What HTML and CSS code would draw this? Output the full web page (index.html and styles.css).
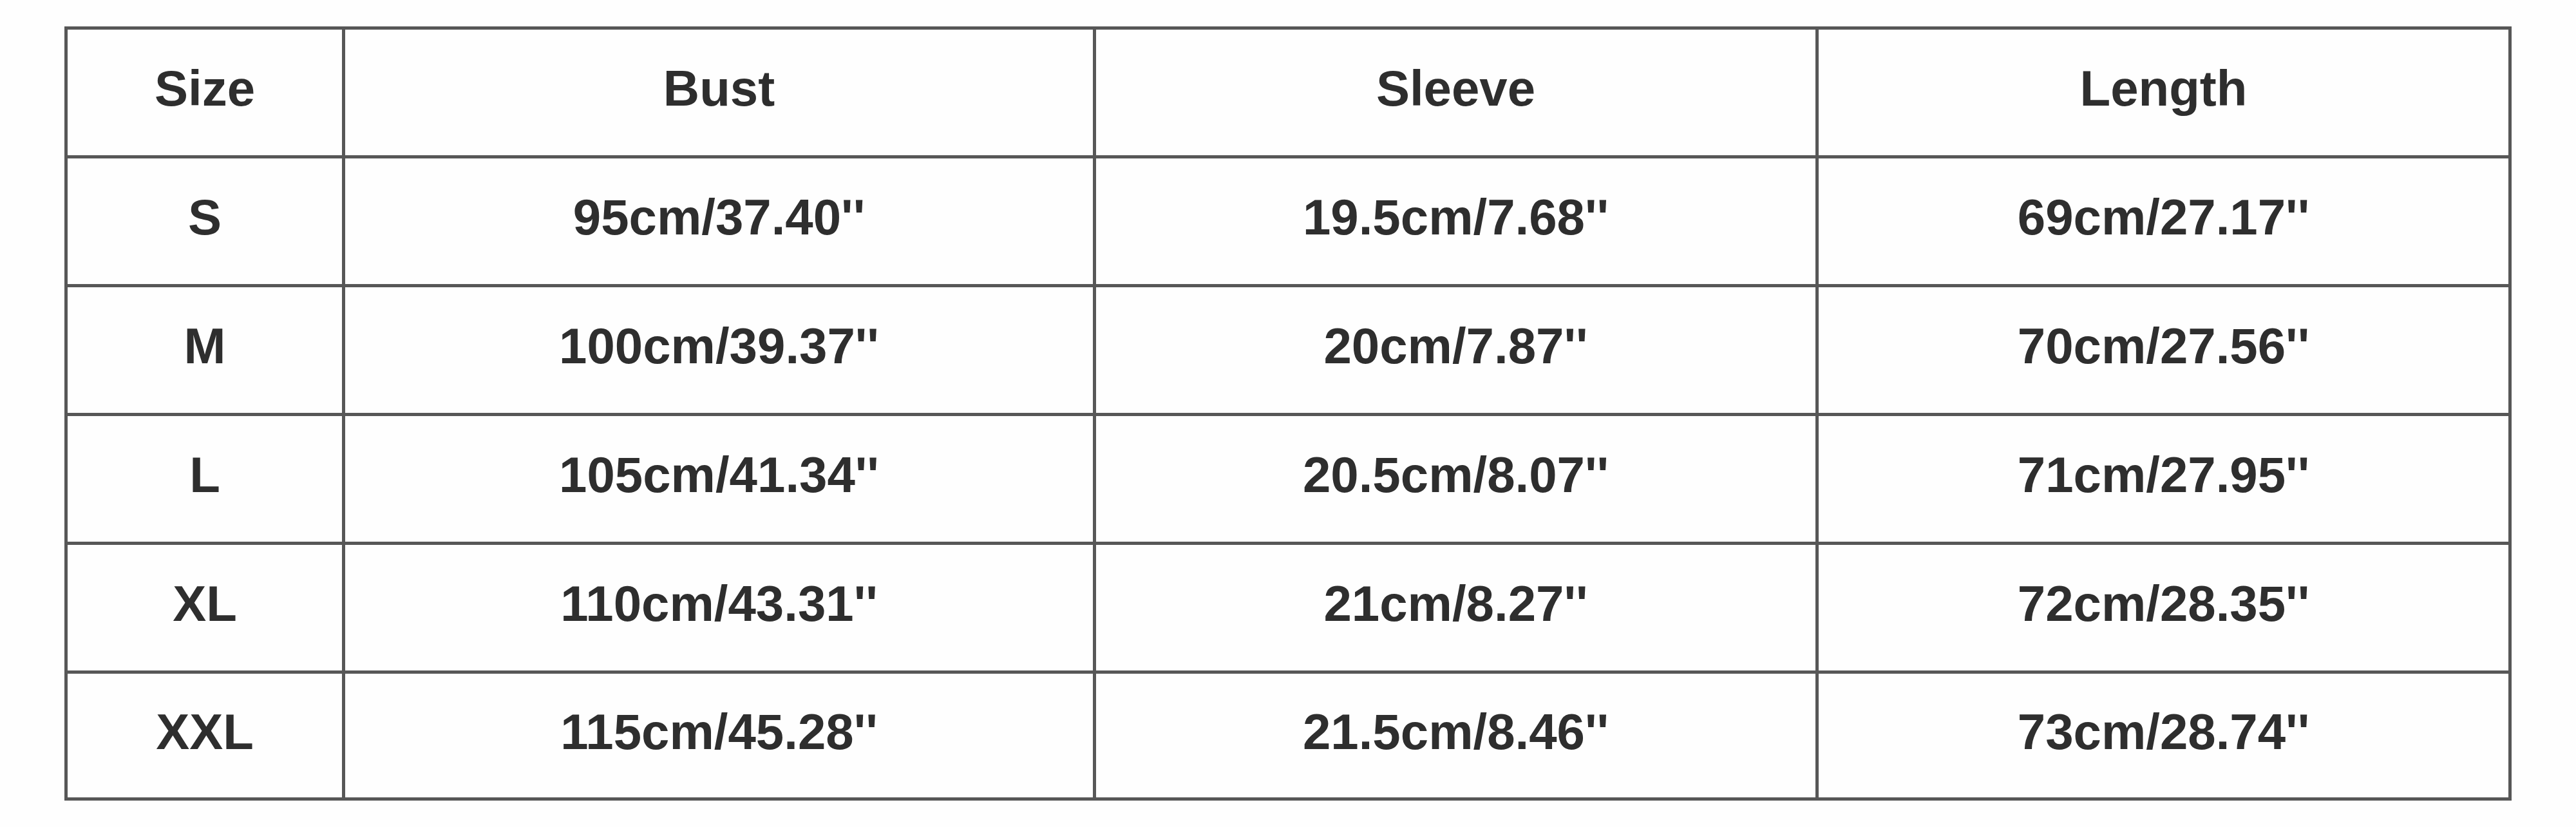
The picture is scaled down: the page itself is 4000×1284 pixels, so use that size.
FILE: index.html
```html
<!DOCTYPE html>
<html lang="en">
<head>
<meta charset="utf-8">
<title>Size Chart</title>
<link rel="stylesheet" href="styles.css">
</head>
<body>
<table class="chart">
  <colgroup>
    <col class="c-size">
    <col class="c-bust">
    <col class="c-sleeve">
    <col class="c-length">
  </colgroup>
  <tr class="r-head"><td>Size</td><td>Bust</td><td>Sleeve</td><td>Length</td></tr>
  <tr class="r"><td>S</td><td>95cm/37.40''</td><td>19.5cm/7.68''</td><td>69cm/27.17''</td></tr>
  <tr class="r"><td>M</td><td>100cm/39.37''</td><td>20cm/7.87''</td><td>70cm/27.56''</td></tr>
  <tr class="r"><td>L</td><td>105cm/41.34''</td><td>20.5cm/8.07''</td><td>71cm/27.95''</td></tr>
  <tr class="r"><td>XL</td><td>110cm/43.31''</td><td>21cm/8.27''</td><td>72cm/28.35''</td></tr>
  <tr class="r-last"><td>XXL</td><td>115cm/45.28''</td><td>21.5cm/8.46''</td><td>73cm/28.74''</td></tr>
</table>
</body>
</html>
```

FILE: styles.css
```css
html, body {
  margin: 0;
  padding: 0;
  background: #fefefe;
}

body {
  padding: 41px 0 0 100px;
}

.chart {
  border-collapse: separate;
  border-spacing: 0;
  table-layout: fixed;
  width: 3800px;
  border-top: 5px solid #575757;
  border-left: 5px solid #575757;
  font-family: "Liberation Sans", Arial, sans-serif;
  font-weight: bold;
  font-size: 78px;
  color: #2e2e2e;
}

.c-size { width: 431px; }
.c-bust { width: 1166px; }
.c-sleeve { width: 1122px; }
.c-length { width: 1076px; }

.chart td {
  box-sizing: border-box;
  border-right: 5px solid #575757;
  border-bottom: 5px solid #575757;
  text-align: center;
  vertical-align: middle;
  padding: 0 0 12px 0;
  white-space: nowrap;
}

.r-head td,
.r td {
  height: 200px;
}

.r-last td {
  height: 197px;
}
```
